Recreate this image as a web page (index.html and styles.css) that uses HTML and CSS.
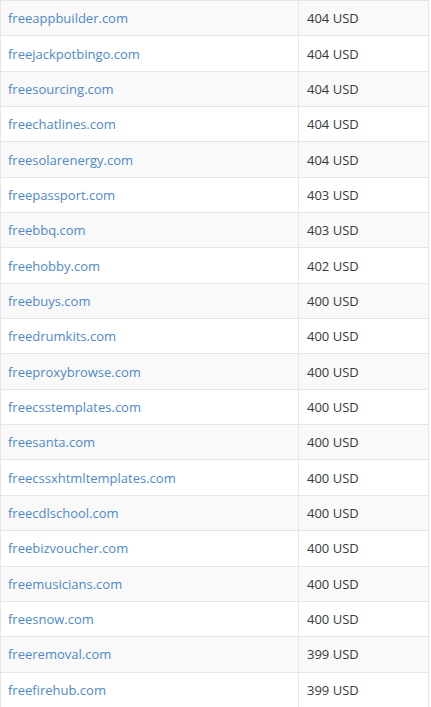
FILE: index.html
```html
<!DOCTYPE html>
<html>
<head>
<meta charset="utf-8">
<link rel="stylesheet" href="styles.css">
</head>
<body>
<table class="domains">
<tbody>
<tr><td class="name"><a href="#">freeappbuilder.com</a></td><td class="price">404 USD</td></tr>
<tr><td class="name"><a href="#">freejackpotbingo.com</a></td><td class="price">404 USD</td></tr>
<tr><td class="name"><a href="#">freesourcing.com</a></td><td class="price">404 USD</td></tr>
<tr><td class="name"><a href="#">freechatlines.com</a></td><td class="price">404 USD</td></tr>
<tr><td class="name"><a href="#">freesolarenergy.com</a></td><td class="price">404 USD</td></tr>
<tr><td class="name"><a href="#">freepassport.com</a></td><td class="price">403 USD</td></tr>
<tr><td class="name"><a href="#">freebbq.com</a></td><td class="price">403 USD</td></tr>
<tr><td class="name"><a href="#">freehobby.com</a></td><td class="price">402 USD</td></tr>
<tr><td class="name"><a href="#">freebuys.com</a></td><td class="price">400 USD</td></tr>
<tr><td class="name"><a href="#">freedrumkits.com</a></td><td class="price">400 USD</td></tr>
<tr><td class="name"><a href="#">freeproxybrowse.com</a></td><td class="price">400 USD</td></tr>
<tr><td class="name"><a href="#">freecsstemplates.com</a></td><td class="price">400 USD</td></tr>
<tr><td class="name"><a href="#">freesanta.com</a></td><td class="price">400 USD</td></tr>
<tr><td class="name"><a href="#">freecssxhtmltemplates.com</a></td><td class="price">400 USD</td></tr>
<tr><td class="name"><a href="#">freecdlschool.com</a></td><td class="price">400 USD</td></tr>
<tr><td class="name"><a href="#">freebizvoucher.com</a></td><td class="price">400 USD</td></tr>
<tr><td class="name"><a href="#">freemusicians.com</a></td><td class="price">400 USD</td></tr>
<tr><td class="name"><a href="#">freesnow.com</a></td><td class="price">400 USD</td></tr>
<tr><td class="name"><a href="#">freeremoval.com</a></td><td class="price">399 USD</td></tr>
<tr><td class="name"><a href="#">freefirehub.com</a></td><td class="price">399 USD</td></tr>
</tbody>
</table>
</body>
</html>
```
FILE: styles.css
```css
html, body {
  margin: 0;
  padding: 0;
  background: #ffffff;
}
body {
  font-family: "Open Sans", "Liberation Sans", sans-serif;
  font-size: 13px;
  color: #333333;
}
.domains {
  width: 429px;
  border-collapse: collapse;
  table-layout: fixed;
}
.domains tr {
  height: 35.35px;
}
.domains tr:nth-child(odd) {
  background: #f9f9f9;
}
.domains td {
  border: 1px solid #e6e6e6;
  padding: 0 8px;
  vertical-align: middle;
  white-space: nowrap;
  line-height: 18px;
}
.domains td.name {
  width: 283px;
  padding: 0 7px;
}
.domains td.price {
  color: #3a3a3a;
}
.domains a {
  color: #5089c6;
  text-decoration: none;
}
```
